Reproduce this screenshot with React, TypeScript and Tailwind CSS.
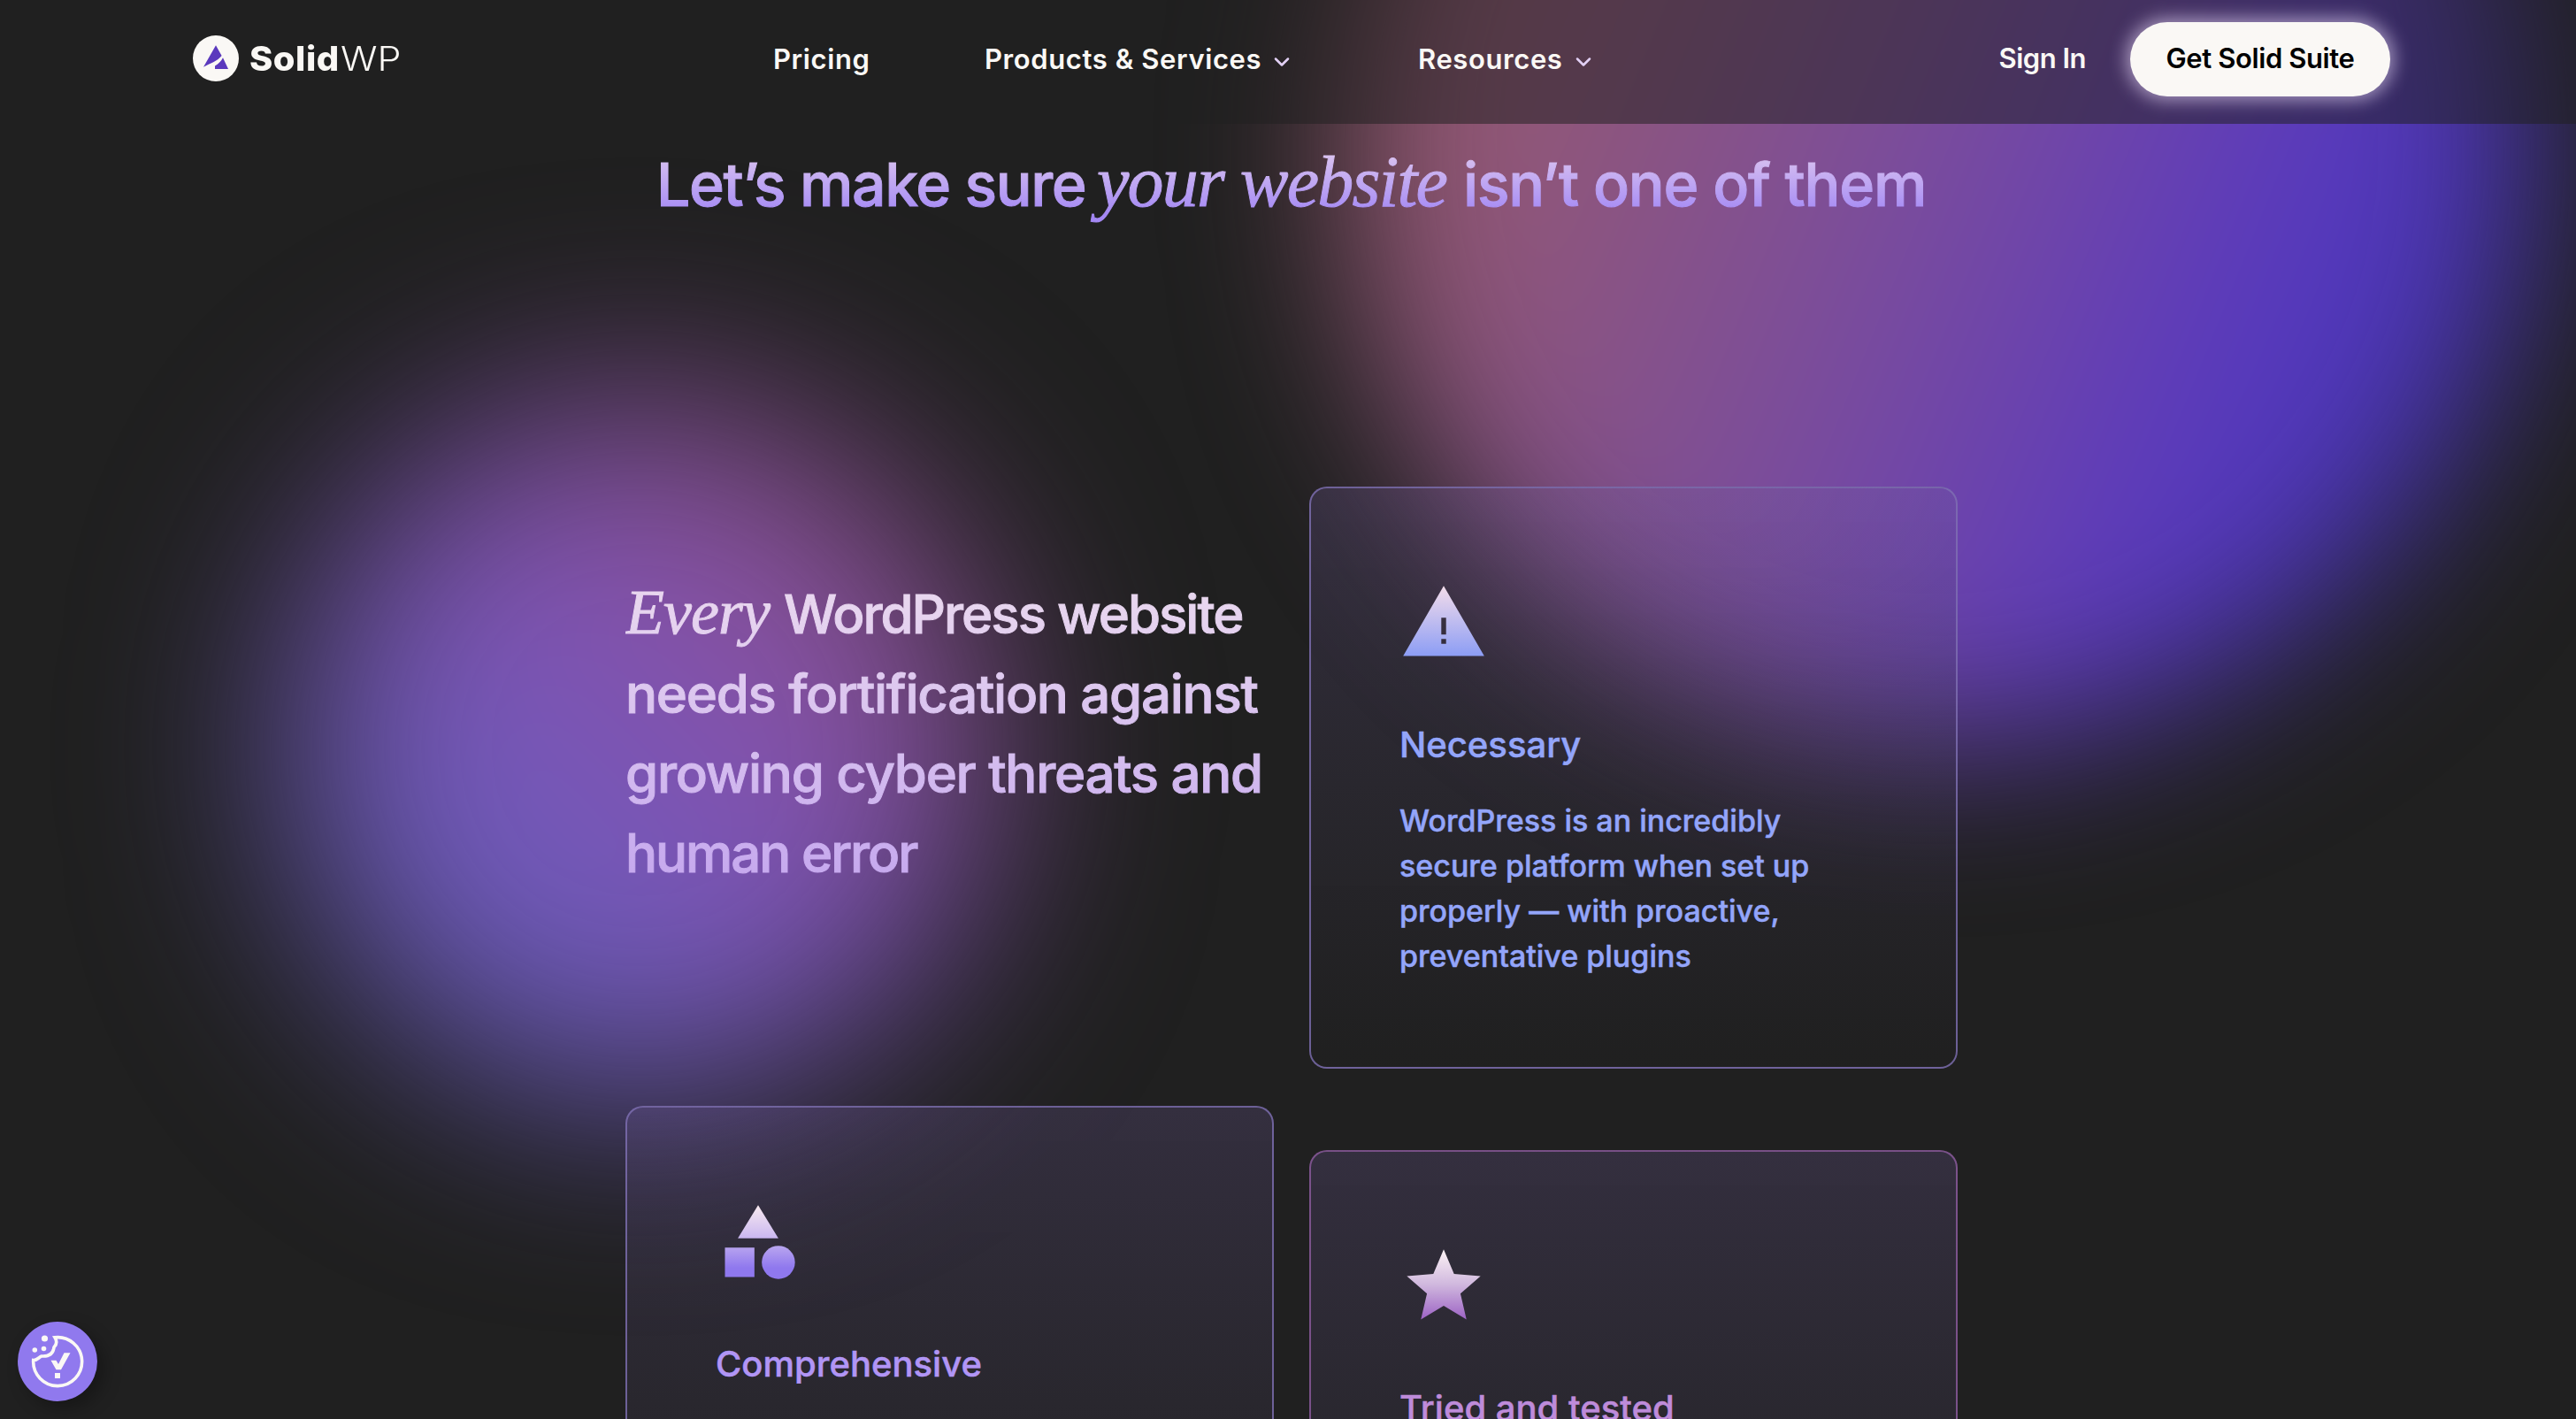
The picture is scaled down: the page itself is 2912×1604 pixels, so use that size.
import type { ReactNode } from "react";
import { ChevronDown } from "lucide-react";

type CardProps = {
  title: string;
  icon: ReactNode;
  className: string;
  titleClass: string;
  children?: ReactNode;
};

const Logo = () => {
  return (
    <a className="flex items-center w-[236px]">
      <svg className="h-[52px] w-[52px] shrink-0" viewBox="0 0 52 52">
        <circle cx="26" cy="26" r="26" fill="#faf8f5" />
        <path
          d="M26 11.300 32.600 23C27 29.500 20 31.500 12 35.700Z"
          fill="#5b39bd"
        />
        <path d="M34 25.300 40 38H25V34.500C29.500 32 32 29 34 25.300Z" fill="#5b39bd" />
      </svg>
      <span className="ml-[12px] flex items-baseline whitespace-nowrap text-[38px] leading-none text-[#faf8f5]">
        <span className="w-[103px] origin-left scale-x-105 font-extrabold tracking-[0.5px]">Solid</span>
        <span className="origin-left scale-x-113 font-light">WP</span>
      </span>
    </a>
  );
};

const Header = () => {
  return (
    <header className="relative z-10 flex h-[140px] items-center bg-[#202020]/53 pb-[8px] pl-[218px] pr-[210px] text-[#faf8f5]">
      <Logo />
      <nav className="ml-[420px] flex items-center whitespace-nowrap pt-[2px] text-[31px] font-semibold tracking-[0.6px]">
        <a className="w-[239px]">Pricing</a>
        <a className="flex w-[490px] items-center">
          Products &amp; Services
          <ChevronDown className="ml-[9px] mt-[6px] h-7 w-7 text-[#e2d0f5]" strokeWidth={2.2} />
        </a>
        <a className="flex items-center">
          Resources
          <ChevronDown className="ml-[9px] mt-[6px] h-7 w-7 text-[#e2d0f5]" strokeWidth={2.2} />
        </a>
      </nav>
      <div className="ml-auto flex items-center whitespace-nowrap pt-px text-[31px] font-semibold tracking-[-0.5px]">
        <a className="mr-[50px]">Sign In</a>
        <a className="flex h-[84px] w-[294px] items-center justify-center rounded-full bg-[#faf8f5] text-black tracking-[-0.4px] shadow-[0_0_20px_4px_rgba(240,225,255,0.6)]">
          Get Solid Suite
        </a>
      </div>
    </header>
  );
};

const WarningIcon = () => {
  return (
    <svg className="ml-px h-[100px] w-[100px]" viewBox="0 0 24 24">
      <defs>
        <linearGradient id="warning" x1="0" y1="0" x2="0" y2="1">
          <stop offset="0" stopColor="#f3dcea" />
          <stop offset="1" stopColor="#8c9df5" />
        </linearGradient>
      </defs>
      <path
        fill="url(#warning)"
        fillRule="evenodd"
        d="M12 2 23 21H1ZM11.350 10.600V15.200H12.650V10.600ZM11.350 16.400V17.700H12.650V16.400Z"
      />
    </svg>
  );
};

const ShapesIcon = () => {
  return (
    <svg className="-ml-px h-[100px] w-[100px]" viewBox="0 0 24 24">
      <defs>
        <linearGradient id="shapes" gradientUnits="userSpaceOnUse" x1="0" y1="2" x2="0" y2="22">
          <stop offset="0" stopColor="#f8e9f0" />
          <stop offset="0.4" stopColor="#cfbdf0" />
          <stop offset="0.85" stopColor="#8f78ee" />
        </linearGradient>
      </defs>
      <path fill="url(#shapes)" d="M12 2 17.500 11H6.500ZM3 13.500H11V21.500H3Z" />
      <circle fill="url(#shapes)" cx="17.5" cy="17.5" r="4.5" />
    </svg>
  );
};

const StarIcon = () => {
  return (
    <svg className="ml-px h-[100px] w-[100px]" viewBox="0 0 24 24">
      <defs>
        <linearGradient id="star" x1="0" y1="0" x2="0" y2="1">
          <stop offset="0" stopColor="#fdf3f5" />
          <stop offset="0.5" stopColor="#d0b8de" />
          <stop offset="1" stopColor="#9c62c4" />
        </linearGradient>
      </defs>
      <path
        fill="url(#star)"
        d="M12 17.270 18.180 21l-1.640-7.030L22 9.240l-7.190-.610L12 2 9.190 8.630 2 9.240l5.460 4.730L5.820 21z"
      />
    </svg>
  );
};

const Card = ({ title, icon, className, titleClass, children }: CardProps) => {
  return (
    <article
      className={`h-[658px] w-[733px] rounded-[20px] border-2 bg-linear-to-b from-[#705c9c]/25 to-[#202020]/30 pl-[99px] pt-[102px] [-webkit-text-stroke:0.5px_currentColor] ${className}`}
    >
      {icon}
      <h3
        className={`ml-px mt-[58px] whitespace-nowrap text-[40px] font-medium leading-[60px] ${titleClass}`}
      >
        {title}
      </h3>
      {children}
    </article>
  );
};

const CookieButton = () => {
  return (
    <button className="absolute bottom-[20px] left-[20px] z-20 h-[90px] w-[90px] rounded-full bg-[#9079ee] shadow-[8px_8px_20px_rgba(0,0,0,0.3)]">
      <svg viewBox="0 0 90 90" className="h-[90px] w-[90px]" fill="none">
        <path
          d="M42 17.800A27.500 27.500 0 1 1 17.700 43.500C22 44 24 40 27 39C34 39.500 40 37 41 29C45 25 44 21 42 17.800Z"
          stroke="#faf8f5"
          strokeWidth="3.6"
        />
        <circle cx="30.5" cy="19" r="3.6" fill="#faf8f5" />
        <circle cx="19.3" cy="32" r="2.8" fill="#faf8f5" />
        <circle cx="29.5" cy="30.5" r="2.8" fill="#faf8f5" />
        <path d="M37.500 43.700H43.500L46 48 52.500 35.300H59.500L49 54.300H43.500Z" fill="#faf8f5" />
        <path d="M42 58H48V64H42Z" fill="#faf8f5" />
      </svg>
    </button>
  );
};

export default function App() {
  return (
    <div className="relative h-[1604px] w-[2912px] overflow-hidden bg-[#202020] font-['Inter',sans-serif]">
      {/* glowing blobs */}
      <div className="absolute left-[1520px] top-[-496px] h-[1340px] w-[1340px] rounded-full bg-[linear-gradient(112deg,#965a70_15%,#8f5679_26%,#7f4f95_44%,#7046a8_57%,#5a3abd_72%,#4a36b8_82%)] blur-[92px]" />
      <div className="absolute left-[327px] top-[446px] h-[796px] w-[796px] rounded-full bg-linear-45 from-[#6a5cbc] from-25% via-[#8052b2] via-55% to-[#8b5090] to-78% blur-[116px]" />

      <Header />

      <h2 className="relative flex h-[136px] items-baseline whitespace-nowrap bg-linear-to-b from-[#e0c8ee] from-20% to-[#a488f4] to-75% bg-clip-text pl-[742px] text-[68px] font-medium leading-[136px] text-transparent [-webkit-text-stroke:1px_transparent]">
        <span className="w-[498px] tracking-[-1.4px]">Let’s make sure</span>
        <span className="w-[414px] font-['Liberation_Serif',serif] text-[82px] font-normal italic leading-none tracking-[-1.8px]">
          your website
        </span>
        <span className="tracking-[-1.2px]">isn’t one of them</span>
      </h2>

      <main className="relative ml-[707px] mt-[274px] flex gap-[40px]">
        <section className="w-[733px]">
          <h2 className="mt-[99px] flex h-[601px] flex-col whitespace-nowrap bg-linear-to-b from-[#e8d6ef] from-5% to-[#c4a6ee] to-60% bg-clip-text text-[60px] font-medium leading-[90px] text-transparent [-webkit-text-stroke:1px_transparent]">
            <span className="flex items-baseline">
              <span className="w-[179px] font-['Liberation_Serif',serif] text-[72px] font-normal italic leading-none tracking-[-1px]">
                Every
              </span>
              <span className="tracking-[-2px]">WordPress website</span>
            </span>
            <span className="tracking-[-1.3px]">needs fortification against</span>
            <span className="tracking-[-1.3px]">growing cyber threats and</span>
            <span className="tracking-[-2.1px]">human error</span>
          </h2>
          <Card
            title="Comprehensive"
            icon={<ShapesIcon />}
            className="border-[#7f70b4]/80"
            titleClass="text-[#b195f5]"
          />
        </section>
        <section className="flex flex-col gap-[92px]">
          <Card
            title="Necessary"
            icon={<WarningIcon />}
            className="border-[#7f70b4]/80"
            titleClass="text-[#93a5fa]"
          >
            <p className="ml-px mt-[30px] whitespace-nowrap text-[34px] font-medium leading-[51px] text-[#93a5fa]">
              WordPress is an incredibly
              <br />
              secure platform when set up
              <br />
              properly — with proactive,
              <br />
              preventative plugins
            </p>
          </Card>
          <Card
            title="Tried and tested"
            icon={<StarIcon />}
            className="border-[#8f5da0]/80"
            titleClass="text-[#be8bda]"
          />
        </section>
      </main>

      <CookieButton />
    </div>
  );
}
